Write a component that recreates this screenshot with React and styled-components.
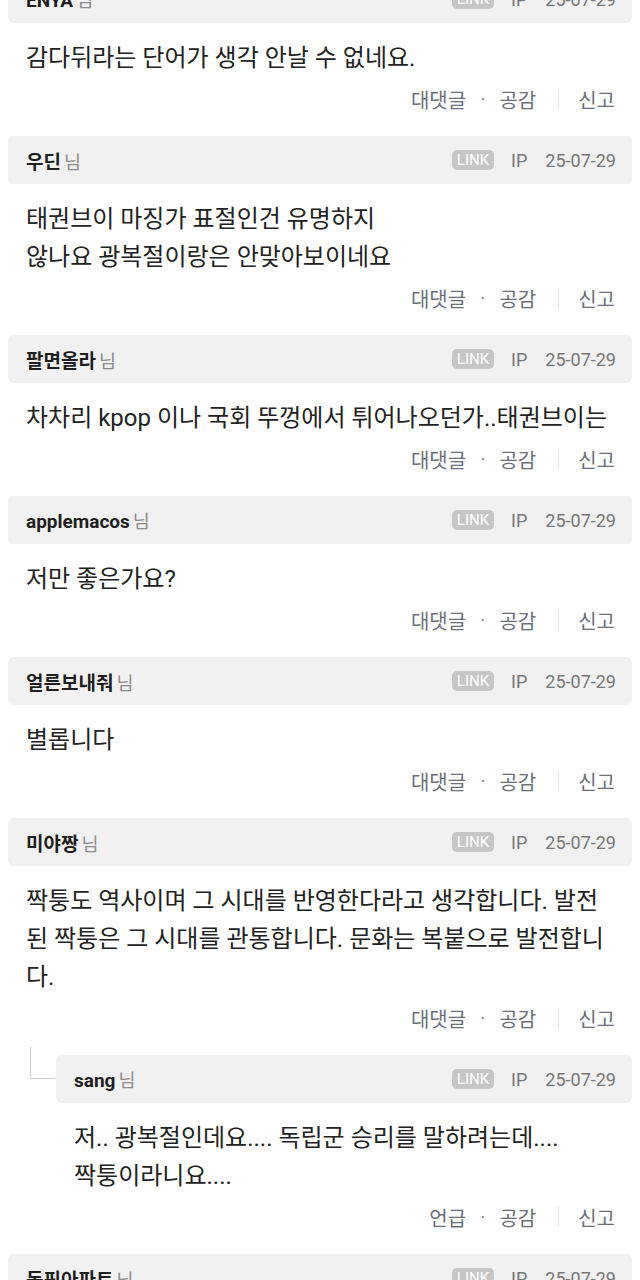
import React from "react";
import styled, { createGlobalStyle } from "styled-components";

const GlobalStyle = createGlobalStyle`
  html, body {
    margin: 0;
    padding: 0;
    background: #ffffff;
  }
  body {
    font-family: Roboto, "Noto Sans CJK KR", "Noto Sans", sans-serif;
    color: #222;
    overflow: hidden;
  }
`;

const comments = [
  {
    name: "ENYA",
    lines: ["감다뒤라는 단어가 생각 안날 수 없네요."],
  },
  {
    name: "우딘",
    lines: ["태권브이 마징가 표절인건 유명하지", "않나요 광복절이랑은 안맞아보이네요"],
  },
  {
    name: "팔면올라",
    lines: ["차차리 kpop 이나 국회 뚜껑에서 튀어나오던가..태권브이는"],
  },
  { name: "applemacos", lines: ["저만 좋은가요?"] },
  { name: "얼른보내줘", lines: ["별롭니다"] },
  {
    name: "미야짱",
    lines: [
      "짝퉁도 역사이며 그 시대를 반영한다라고 생각합니다. 발전",
      "된 짝퉁은 그 시대를 관통합니다. 문화는 복붙으로 발전합니",
      "다.",
    ],
  },
  {
    name: "sang",
    reply: true,
    lines: ["저.. 광복절인데요.... 독립군 승리를 말하려는데....", "짝퉁이라니요...."],
  },
  { name: "독핀아파트", lines: [] },
];

const List = styled.div`
  padding: 0 8px;
  margin-top: -25px;
`;

const Item = styled.div`
  position: relative;
  padding-left: ${(p) => (p.$reply ? "48px" : "0")};

  ${(p) =>
    p.$reply &&
    `
    &::before {
      content: "";
      position: absolute;
      left: 22px;
      top: -8px;
      width: 24px;
      height: 31px;
      border-left: 1.5px solid #cfcfcf;
      border-bottom: 1.5px solid #cfcfcf;
    }
  `}
`;

const Header = styled.div`
  height: 48px;
  display: flex;
  align-items: center;
  justify-content: space-between;
  padding: 0 16px 0 18px;
  background: #f1f1f1;
  border-radius: 6px;
`;

const Author = styled.div`
  display: flex;
  align-items: baseline;
  gap: 3px;
`;

const Nick = styled.span`
  font-size: 19px;
  font-weight: 700;
  color: #1e1e1e;
`;

const Sir = styled.span`
  font-size: 18.5px;
  color: #8c8c8c;
`;

const Meta = styled.div`
  display: flex;
  align-items: center;
  font-size: 18px;
  color: #777;
`;

const LinkBadge = styled.span`
  display: inline-block;
  background: #c6c6c6;
  color: #fff;
  font-size: 15px;
  line-height: 20px;
  padding: 0 5px;
  border-radius: 5px;
  margin-right: 17px;
`;

const Ip = styled.span`
  margin-right: 18px;
`;

const Body = styled.div`
  padding: 16px 17px 0 18px;
  font-size: 24px;
  line-height: 38px;
  color: #222;
  white-space: nowrap;
`;

const Actions = styled.div`
  height: 32px;
  margin: 6px 0 21px;
  padding-right: 17px;
  display: flex;
  align-items: center;
  justify-content: flex-end;
  font-size: 20px;
  color: #6b7079;
`;

const Dot = styled.span`
  margin: 0 14px;
  color: #888;
`;

const Divider = styled.span`
  width: 1px;
  height: 20px;
  background: #e6e6e6;
  margin: 0 19px 0 22px;
`;

const Comment = ({ name, lines, reply }) => (
  <Item $reply={reply}>
    <Header>
      <Author>
        <Nick>{name}</Nick>
        <Sir>님</Sir>
      </Author>
      <Meta>
        <LinkBadge>LINK</LinkBadge>
        <Ip>IP</Ip>
        <span>25-07-29</span>
      </Meta>
    </Header>
    {lines.length > 0 && (
      <>
        <Body>
          {lines.map((l, i) => (
            <div key={i}>{l}</div>
          ))}
        </Body>
        <Actions>
          <span>{reply ? "언급" : "대댓글"}</span>
          <Dot>·</Dot>
          <span>공감</span>
          <Divider />
          <span>신고</span>
        </Actions>
      </>
    )}
  </Item>
);

const App = () => {
  return (
    <>
      <GlobalStyle />
      <List>
        {comments.map((c, i) => (
          <Comment key={i} {...c} />
        ))}
      </List>
    </>
  );
};

export default App;
